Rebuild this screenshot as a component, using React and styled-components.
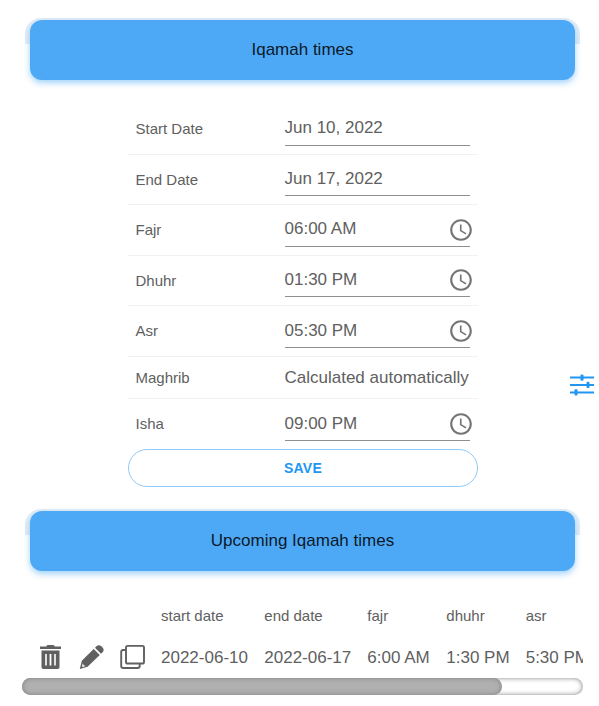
import React from "react";
import styled, { createGlobalStyle } from "styled-components";

const GlobalStyle = createGlobalStyle`
  * { box-sizing: border-box; }
  body {
    margin: 0;
    background: #fff;
    color: #606060;
    font-family: "Liberation Sans", Arial, sans-serif;
    overflow: hidden;
  }
`;

const Page = styled.main`
  position: relative;
  width: 599px;
  height: 706px;
  overflow: hidden;
`;

const Section = styled.section`
  padding: ${(p) => p.$top}px 24px 0 25px;
`;

const Banner = styled.header`
  width: 555px;
  height: 62px;
  padding: 2px 5px 0;
  border-radius: 16px 16px 0 0;
  background: linear-gradient(#e4edf6 26px, transparent 26px);
`;

const BannerTitle = styled.h2`
  margin: 0;
  height: 60px;
  border-radius: 12px;
  background: #4da9f5;
  box-shadow: 0 3px 6px rgba(33, 150, 243, 0.42);
  color: rgba(0, 0, 0, 0.87);
  font-size: 17px;
  font-weight: 400;
  line-height: 60px;
  text-align: center;
`;

const Form = styled.form`
  width: 350px;
  margin: 24px 0 0 103px;
`;

const Row = styled.div`
  display: grid;
  grid-template-columns: 149px 186px;
  height: ${(p) => p.$height}px;
  padding-left: 7.5px;
  border-bottom: ${(p) => (p.$last ? "none" : "1px solid #f1f1f1")};
`;

const Label = styled.label`
  align-self: end;
  padding-bottom: ${(p) => p.$bottom}px;
  font-size: 15px;
  line-height: 18px;
`;

const Field = styled.div`
  display: flex;
  justify-content: space-between;
  align-items: flex-end;
  align-self: end;
  width: 185px;
  height: 32px;
  margin-bottom: ${(p) => (p.$plain ? 3 : 8)}px;
  border-bottom: 1px solid ${(p) => (p.$plain ? "transparent" : "#8f8f8f")};
`;

const Value = styled.span`
  padding-bottom: ${(p) => p.$bottom}px;
  font-size: 17px;
  line-height: 19px;
  white-space: nowrap;
`;

const Clock = styled.svg`
  flex: none;
  width: 26px;
  height: 26px;
  margin: 0 -4px 3px 0;
  fill: #747474;
`;

const SaveButton = styled.button`
  display: block;
  width: 350px;
  height: 38px;
  padding: 0;
  border: 1px solid #90caf9;
  border-radius: 19px;
  background: #fff;
  color: #2196f3;
  font: 700 14px/36px "Liberation Sans", Arial, sans-serif;
  letter-spacing: 0.2px;
`;

const TableScroller = styled.div`
  width: 561px;
  height: 83px;
  margin: 24px 0 0 -3px;
  overflow: hidden;
`;

const Table = styled.div`
  display: grid;
  grid-template-columns: 139px 103.3px 103px 79px 79.4px 80px;
  width: max-content;
`;

const HeadCell = styled.div`
  height: 42px;
  padding-top: 12px;
  font-size: 15px;
  line-height: 18px;
`;

const Cell = styled.div`
  height: 41px;
  padding-top: 11px;
  font-size: 17px;
  line-height: 20px;
  white-space: nowrap;
`;

const Actions = styled.div`
  display: flex;
  gap: 16px;
  padding: 7px 0 0 16px;
`;

const ActionIcon = styled.svg`
  width: 25px;
  height: 26px;
  fill: #606060;
`;

const ScrollTrack = styled.div`
  width: 561px;
  height: 17px;
  margin: 0 0 0 -3px;
  border-radius: 9px;
  background: #fff;
  box-shadow: inset 0 0 5px #808080;
`;

const ScrollThumb = styled.div`
  width: 480px;
  height: 17px;
  border-radius: 9px;
  background: #b0b0b0;
  box-shadow: inset 0 0 5px #808080;
`;

const SettingsIcon = styled.svg`
  position: absolute;
  top: 374px;
  left: 570px;
  width: 24px;
  height: 22px;
  fill: #2196f3;
`;

const fields = [
  { label: "Start Date", value: "Jun 10, 2022", height: 51, labelBottom: 16, valueBottom: 8 },
  { label: "End Date", value: "Jun 17, 2022", height: 50, labelBottom: 15, valueBottom: 7 },
  { label: "Fajr", value: "06:00 AM", height: 51, labelBottom: 16, valueBottom: 8, time: true },
  { label: "Dhuhr", value: "01:30 PM", height: 50, labelBottom: 15, valueBottom: 7, time: true },
  { label: "Asr", value: "05:30 PM", height: 51, labelBottom: 16, valueBottom: 7, time: true },
  { label: "Maghrib", value: "Calculated automatically", height: 42, labelBottom: 11, valueBottom: 7, plain: true },
  { label: "Isha", value: "09:00 PM", height: 50, labelBottom: 16, valueBottom: 7, time: true, last: true },
];

const headings = ["start date", "end date", "fajr", "dhuhr", "asr"];
const upcoming = ["2022-06-10", "2022-06-17", "6:00 AM", "1:30 PM", "5:30 PM"];

function ClockIcon() {
  return (
    <Clock viewBox="0 0 24 24">
      <path d="M11.99 2C6.47 2 2 6.48 2 12s4.47 10 9.99 10C17.52 22 22 17.52 22 12S17.52 2 11.99 2zM12 20c-4.42 0-8-3.58-8-8s3.58-8 8-8 8 3.58 8 8-3.58 8-8 8zm.5-13H11v6l5.25 3.15.75-1.23-4.5-2.67z" />
    </Clock>
  );
}

function TrashIcon() {
  return (
    <ActionIcon viewBox="0 0 25 26">
      <path d="M2 2.4h6.3Q8.8 1 10 1h5q1.200 0 1.700 1.400H23v2.500H2zM3.500 6.500h18v16.700a1.800 1.800 0 0 1-1.800 1.800H5.300a1.800 1.800 0 0 1-1.800-1.800z" />
      <path d="M7.200 10h1.600v11.500H7.200zm4.400 0h1.800v11.500h-1.800zm4.600 0h1.600v11.500h-1.600z" fill="#fff" />
    </ActionIcon>
  );
}

function PencilIcon() {
  return (
    <ActionIcon viewBox="0 0 25 26">
      <path d="M14.700 5 20.800 11 8.500 22.700.8 25l2-8.200zM16 3.800l1.500-1.600c1.300-1.400 3.400-1.400 4.800 0l1.300 1.200c1.400 1.400 1.400 3.500 0 4.800L22 9.700z" />
      <path d="m3.700 19.300.9 2 2 .7-2.800 1-.8-.8z" fill="#fff" />
    </ActionIcon>
  );
}

function CopyIcon() {
  return (
    <ActionIcon viewBox="0 0 25 26">
      <g fill="none" stroke="#606060" strokeWidth="1.9">
        <rect x="6" y="1.900" width="18" height="17.600" rx="1.600" />
        <path d="M6 6H3.200Q1.200 6 1.200 8v14q0 2 2 2h14.500q2 0 2-2v-2.500" />
      </g>
    </ActionIcon>
  );
}

export default function App() {
  return (
    <Page>
      <GlobalStyle />
      <Section $top={18}>
        <Banner><BannerTitle>Iqamah times</BannerTitle></Banner>
        <Form>
          {fields.map((f) => (
            <Row key={f.label} $height={f.height} $last={f.last}>
              <Label $bottom={f.labelBottom}>{f.label}</Label>
              <Field $plain={f.plain}>
                <Value $bottom={f.valueBottom}>{f.value}</Value>
                {f.time && <ClockIcon />}
              </Field>
            </Row>
          ))}
          <SaveButton type="button">SAVE</SaveButton>
        </Form>
      </Section>
      <Section $top={22}>
        <Banner><BannerTitle>Upcoming Iqamah times</BannerTitle></Banner>
        <TableScroller>
          <Table>
            <HeadCell />
            {headings.map((h) => <HeadCell key={h}>{h}</HeadCell>)}
            <Actions><TrashIcon /><PencilIcon /><CopyIcon /></Actions>
            {upcoming.map((v) => <Cell key={v}>{v}</Cell>)}
          </Table>
        </TableScroller>
        <ScrollTrack><ScrollThumb /></ScrollTrack>
      </Section>
      <SettingsIcon viewBox="0 0 24 22">
        <path d="M0 2.400h24v2.100H0zm0 7.500h24V12H0zm0 7.500h24v2.100H0z" />
        <rect x="10.500" y="0.400" width="3" height="6.300" rx="1" />
        <rect x="16.500" y="7.800" width="3" height="6.300" rx="1" />
        <rect x="4.500" y="15.300" width="3" height="6.300" rx="1" />
      </SettingsIcon>
    </Page>
  );
}
